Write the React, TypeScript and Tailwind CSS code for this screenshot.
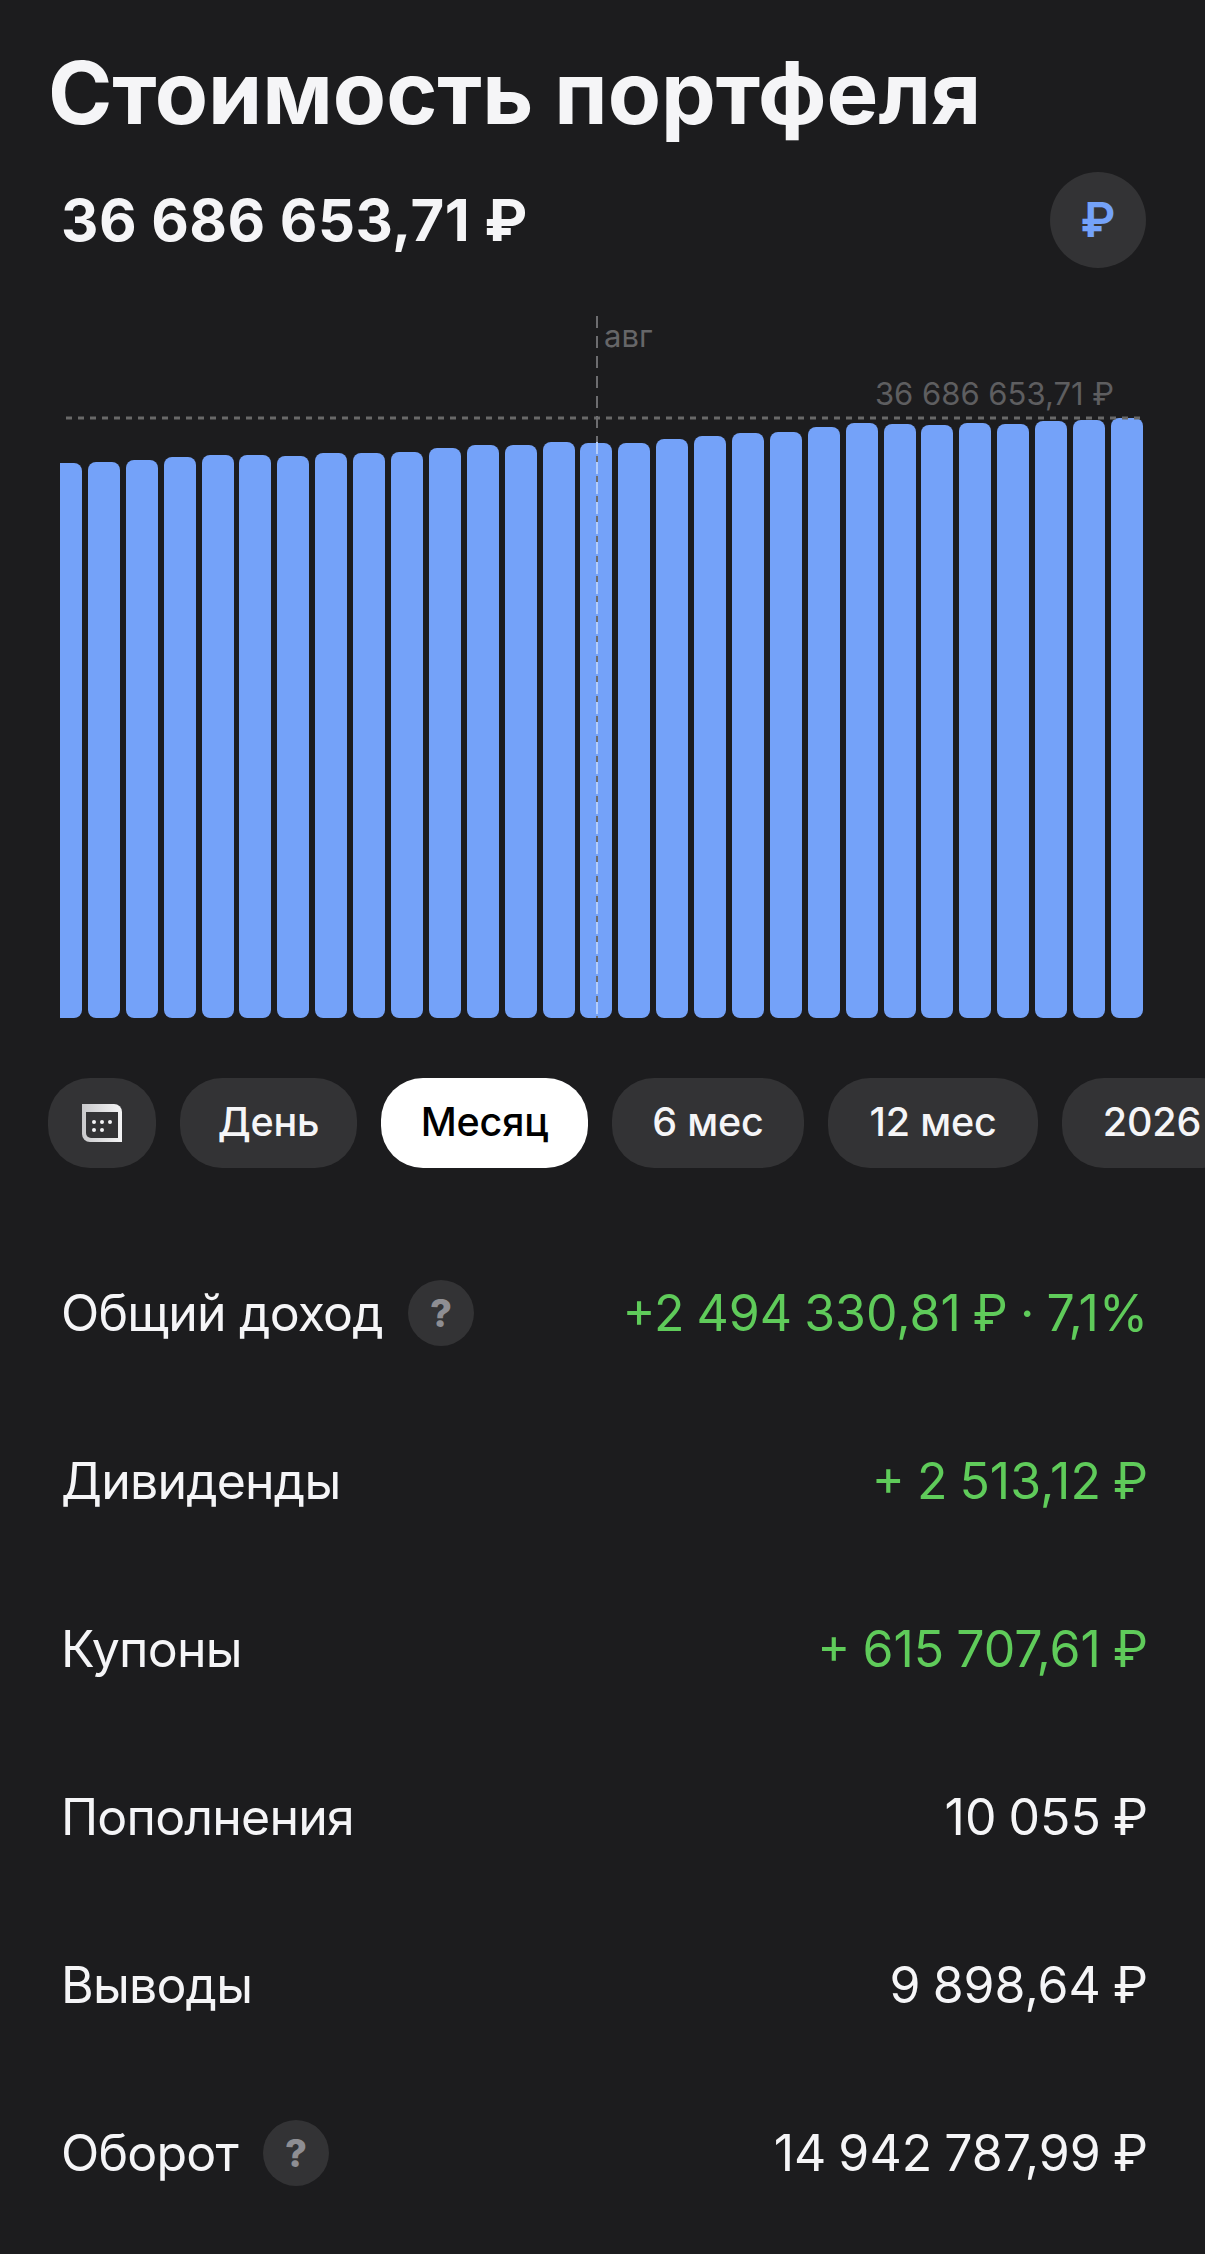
const barTops = [463, 462, 460, 457, 455, 455, 456, 453, 453, 452, 448, 445, 445, 442, 443, 443, 439, 436, 433, 432, 427, 423, 424, 425, 423, 424, 421, 420, 418];
const chartBottom = 1018;

const rows = [
  { label: "Общий доход", value: "+2 494 330,81 ₽ · 7,1%", green: true, hint: true },
  { label: "Дивиденды", value: "+ 2 513,12 ₽", green: true },
  { label: "Купоны", value: "+ 615 707,61 ₽", green: true },
  { label: "Пополнения", value: "10 055 ₽" },
  { label: "Выводы", value: "9 898,64 ₽" },
  { label: "Оборот", value: "14 942 787,99 ₽", hint: true },
];

function CalendarIcon() {
  return (
    <svg width="40" height="38" viewBox="0 0 40 38" fill="none">
      <defs>
        <linearGradient id="cal" x1="0" y1="0" x2="1" y2="0">
          <stop offset="0" stopColor="#c9c9cb" />
          <stop offset="1" stopColor="#f4f4f5" />
        </linearGradient>
      </defs>
      <path d="M0 0H32a8 8 0 0 1 8 8V38H8a8 8 0 0 1-8-8Z" fill="url(#cal)" />
      <path d="M4 8H36V34H9a5 5 0 0 1-5-5Z" fill="#333335" />
      <circle cx="12" cy="18" r="2" fill="#f4f4f5" />
      <circle cx="20" cy="18" r="2" fill="#f4f4f5" />
      <circle cx="28" cy="18" r="2" fill="#f4f4f5" />
      <circle cx="12" cy="26" r="2" fill="#f4f4f5" />
      <circle cx="20" cy="26" r="2" fill="#f4f4f5" />
    </svg>
  );
}

function Chip({ label, active, width }: { label: string; active?: boolean; width: string }) {
  return (
    <div
      className={`flex h-[90px] shrink-0 items-center justify-center rounded-[42px] text-[39.5px] font-medium tracking-[-0.2px] ${width} ${
        active ? "bg-white text-black" : "bg-[#333335] text-[#f5f5f7]"
      }`}
    >
      {label}
    </div>
  );
}

function Hint() {
  return (
    <div className="ml-[25px] flex h-[66px] w-[66px] items-center justify-center rounded-full bg-[#333335] text-[38px] font-extrabold tracking-normal text-[#8e8e93]">
      ?
    </div>
  );
}

export default function App() {
  return (
    <div
      className="h-[2254px] w-[1205px] overflow-hidden bg-[#1c1c1e] text-[#f5f5f7]"
      style={{ fontFamily: "Inter, 'Liberation Sans', sans-serif" }}
    >
      {/* Header */}
      <h1 className="h-[172px] pl-[48px] pt-[45px] text-[87px] leading-[96px] font-bold">
        Стоимость портфеля
      </h1>
      <div className="flex h-[96px] items-center justify-between pl-[61px] pr-[59px]">
        <span className="text-[58px] font-bold tracking-[0.45px]">36 686 653,71 ₽</span>
        <div className="flex h-[96px] w-[96px] items-center justify-center rounded-full bg-[#333335] text-[48px] font-semibold text-[#74a2f9]">
          ₽
        </div>
      </div>

      {/* Chart */}
      <div className="relative ml-[60px] mt-[48px] h-[702px] w-[1085px]">
        <div className="flex h-full items-end gap-[5.9px]">
          {barTops.map((top, i) => (
            <div
              key={i}
              className={`shrink-0 rounded-[8px] bg-[#74a2f9] ${i === 0 ? "w-[22px] rounded-tl-none rounded-bl-none" : "w-[32px]"}`}
              style={{ height: chartBottom - top }}
            />
          ))}
        </div>
        <svg className="absolute left-0 top-0" width="1085" height="702" fill="none">
          <line x1="6" y1="102" x2="1085" y2="102" stroke="#686868" strokeWidth="3" strokeDasharray="6 6" />
          <line x1="537" y1="0" x2="537" y2="702" stroke="#6d6d70" strokeWidth="2" strokeDasharray="12 8" />
          <line x1="537" y1="126" x2="537" y2="702" stroke="#b4cdfb" strokeWidth="2" strokeDasharray="12 8" />
        </svg>
        <span className="absolute left-[544px] top-[0px] text-[31px] leading-[40px] text-[#666668]">авг</span>
        <span className="absolute right-[31px] top-[58px] text-[31px] leading-[40px] text-[#5e5e60]">36 686 653,71 ₽</span>
      </div>

      {/* Period chips */}
      <div className="ml-[48px] mt-[60px] flex w-[1157px] gap-[24px] overflow-hidden">
        <div className="flex h-[90px] w-[108px] shrink-0 items-center justify-center rounded-[42px] bg-[#333335]">
          <CalendarIcon />
        </div>
        <Chip label="День" width="w-[177px]" />
        <Chip label="Месяц" width="w-[207px]" active />
        <Chip label="6 мес" width="w-[192px]" />
        <Chip label="12 мес" width="w-[210px]" />
        <Chip label="2026" width="w-[180px]" />
      </div>

      {/* Stats */}
      <div className="mt-[61px] pl-[61px] pr-[57px]">
        {rows.map((row) => (
          <div key={row.label} className="flex h-[168px] items-center justify-between text-[50px]">
            <div className="flex items-center">
              <span className="tracking-[-0.8px]">{row.label}</span>
              {row.hint && <Hint />}
            </div>
            <span className={`[word-spacing:-2px] ${row.green ? "text-[#5fcb5a]" : ""}`}>{row.value}</span>
          </div>
        ))}
      </div>
    </div>
  );
}
